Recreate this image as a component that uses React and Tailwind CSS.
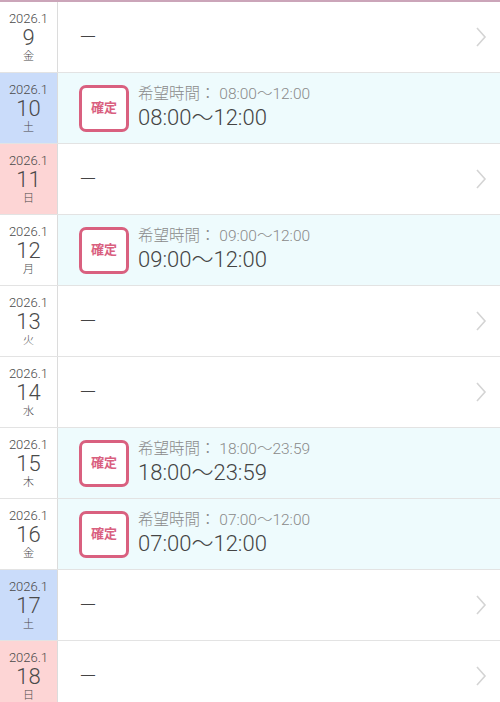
const rows = [
  { day: 9, wd: "金", kind: "normal" },
  { day: 10, wd: "土", kind: "sat", time: "08:00〜12:00" },
  { day: 11, wd: "日", kind: "sun" },
  { day: 12, wd: "月", kind: "normal", time: "09:00〜12:00" },
  { day: 13, wd: "火", kind: "normal" },
  { day: 14, wd: "水", kind: "normal" },
  { day: 15, wd: "木", kind: "normal", time: "18:00〜23:59" },
  { day: 16, wd: "金", kind: "normal", time: "07:00〜12:00" },
  { day: 17, wd: "土", kind: "sat" },
  { day: 18, wd: "日", kind: "sun" },
];

function Chevron() {
  return (
    <svg width="14" height="22" viewBox="0 0 14 22" fill="none">
      <path d="M3 2 L11 11 L3 20" stroke="#d4d4d4" strokeWidth="1.6" />
    </svg>
  );
}

function Row({ day, wd, kind, time }) {
  const dateBg =
    kind === "sat" ? "bg-[#cadcfa]" : kind === "sun" ? "bg-[#fdd5d5]" : "bg-white";

  return (
    <div className="flex h-[71px] border-b border-[#e3e3e3]">
      {/* date */}
      <div
        className={`w-[58px] shrink-0 border-r border-[#dcdcdc] flex flex-col items-center justify-center text-[#4a4a4a] font-light ${dateBg}`}
      >
        <span className="text-[13px] leading-[15px]">2026.1</span>
        <span className="text-[22px] leading-[22px] mt-[1px]">{day}</span>
        <span className="text-[11px] leading-[13px] mt-[1px]">{wd}</span>
      </div>

      {/* content */}
      {time ? (
        <div className="flex-1 flex items-center bg-[#eefbfd] pl-[21px]">
          <div className="w-[50px] h-[47px] rounded-[7px] border-[3px] border-[#d9607f] bg-white flex items-center justify-center">
            <span className="text-[13px] font-bold text-[#d9607f]">確定</span>
          </div>
          <div className="ml-[9px] flex flex-col font-light">
            <span className="text-[15.5px] leading-[18px] text-[#8a8a8a]">
              希望時間： {time}
            </span>
            <span className="text-[22px] leading-[26px] text-[#444] mt-[2px]">
              {time}
            </span>
          </div>
        </div>
      ) : (
        <div className="flex-1 flex items-center justify-between bg-white pl-[21px] pr-[12px]">
          <span className="text-[18px] text-[#444] font-light">ー</span>
          <Chevron />
        </div>
      )}
    </div>
  );
}

export default function App() {
  return (
    <div
      className="w-[500px] h-[702px] overflow-hidden bg-white border-t-2 border-[#cba5b9]"
      style={{ fontFamily: '"Roboto", "Noto Sans CJK JP", sans-serif' }}
    >
      {rows.map((r) => (
        <Row key={r.day} {...r} />
      ))}
    </div>
  );
}
